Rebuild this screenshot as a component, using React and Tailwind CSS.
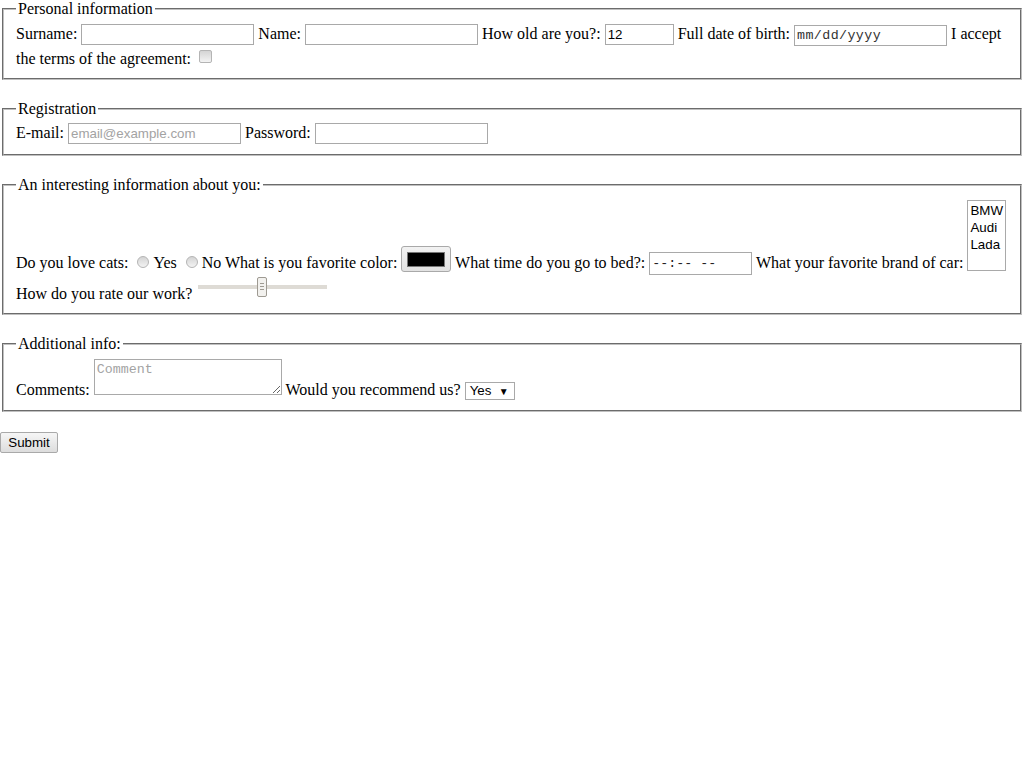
import React from "react";

const fs =
  "block mx-[2px] mb-[20px] px-[12px] pt-[5.6px] pb-[10px] border-2 [border-style:groove] border-[#c0c0c0] min-w-0";
const lg = "px-[2px]";
const sansF = "font-['Liberation_Sans',Arial,sans-serif]";
const monoF = "font-['Liberation_Mono','Courier_New',monospace]";
const sans = sansF + " text-[13.333px]";
const base =
  "inline-block h-[21px] border border-[#a9a9a9] px-[2px] py-[1px] leading-[normal] text-[13.333px] bg-white align-baseline outline-none placeholder:text-[#a3a3a3] ";
const txt = base + "text-black " + sansF;

function Radio() {
  return (
    <span className="inline-block w-[12px] h-[12px] rounded-full border border-[#b4b4b4] bg-linear-to-b from-[#d4d4d4] to-[#f3f3f3] mt-[3px] ml-[5px] mr-[4px] align-baseline" />
  );
}

export default function App() {
  return (
    <div className="min-h-[768px] bg-white text-black text-[16px] leading-[normal] font-['Liberation_Serif','Times_New_Roman',serif]">
      <form onSubmit={(e) => e.preventDefault()}>
        <fieldset className={fs}>
          <legend className={lg}>Personal information</legend>
          Surname:{" "}
          <input type="text" className={txt + " w-[173px]"} />{" "}
          Name:{" "}
          <input type="text" className={txt + " w-[173px]"} />{" "}
          How old are you?:{" "}
          <input type="text" defaultValue="12" className={txt + " w-[69px]"} />{" "}
          Full date of birth:{" "}
          <input
            type="text"
            defaultValue="mm/dd/yyyy"
            className={base + "w-[153px] text-[#333] tracking-[0.4px] " + monoF}
          />{" "}
          I accept the terms of the agreement:{" "}
          <span className="inline-block w-[13px] h-[13px] rounded-[2px] border border-[#b4b4b4] bg-linear-to-b from-[#d4d4d4] to-[#f3f3f3] ml-[4px] mr-[3px] mt-[4px] mb-[1px] align-baseline" />
        </fieldset>

        <fieldset className={fs}>
          <legend className={lg}>Registration</legend>
          E-mail:{" "}
          <input
            type="text"
            placeholder="email@example.com"
            className={txt + " w-[173px]"}
          />{" "}
          Password:{" "}
          <input type="password" className={txt + " w-[173px]"} />
        </fieldset>

        <fieldset className={fs}>
          <legend className={lg}>An interesting information about you:</legend>
          Do you love cats: <Radio />Yes <Radio />No What is you favorite color:{" "}
          <span className="inline-block w-[50px] h-[26px] border border-[#a9a9a9] rounded-[3px] bg-linear-to-b from-[#f2f2f2] to-[#e2e2e2] px-[5px] pt-[5px] pb-[4px] overflow-hidden align-[-4px]">
            <span className="block w-full h-full bg-black border border-[#777]" />
          </span>{" "}
          What time do you go to bed?:{" "}
          <input
            type="text"
            defaultValue="--:-- --"
            className={base + "!h-[23px] w-[103px] text-[#222] whitespace-pre !align-[1px] " + monoF}
          />{" "}
          What your favorite brand of car:{" "}
          <span
            className={
              "inline-block w-[39px] h-[71px] border border-[#a9a9a9] overflow-hidden align-[-3px] pl-[2px] pt-[1px] leading-[17px] " +
              sans
            }
          >
            <span className="block">BMW</span>
            <span className="block">Audi</span>
            <span className="block">Lada</span>
          </span>
          <br />
          How do you rate our work?{" "}
          <span className="relative inline-block w-[129px] h-[21px] mx-[2px] mt-[1px] mb-[2px] align-baseline">
            <span className="absolute left-0 right-0 top-[9px] h-[4px] bg-[#dedbd5]" />
            <span className="absolute left-[59px] top-[1px] w-[10px] h-[20px] border border-[#9e9a92] bg-[#f2f1ee] rounded-[2px] flex flex-col items-center justify-center gap-[2px]">
              <span className="block w-[4px] h-px bg-[#9e9a92]" />
              <span className="block w-[4px] h-px bg-[#9e9a92]" />
              <span className="block w-[4px] h-px bg-[#9e9a92]" />
            </span>
          </span>
        </fieldset>

        <fieldset className={fs}>
          <legend className={lg}>Additional info:</legend>
          Comments:{" "}
          <textarea
            placeholder="Comment"
            className={
              "inline-block w-[188px] h-[36px] mt-[1px] border border-[#a9a9a9] p-[2px] text-[13.333px] leading-[normal] resize align-baseline placeholder:text-[#a3a3a3] outline-none " +
              monoF
            }
          />{" "}
          Would you recommend us?{" "}
          <span
            className={
              "inline-flex items-baseline justify-between w-[50px] h-[18px] border border-[#a9a9a9] pl-[4px] pr-[5px] leading-[16px] " +
              sans
            }
          >
            <span>Yes</span>
            <span className="text-[10px]">▼</span>
          </span>
        </fieldset>

        <button
          type="submit"
          className={
            "block w-[58px] h-[21px] border border-[#a9a9a9] rounded-[2px] bg-linear-to-b from-[#f6f6f6] to-[#dddddd] leading-[normal] text-center " +
            sans
          }
        >
          Submit
        </button>
      </form>
    </div>
  );
}
